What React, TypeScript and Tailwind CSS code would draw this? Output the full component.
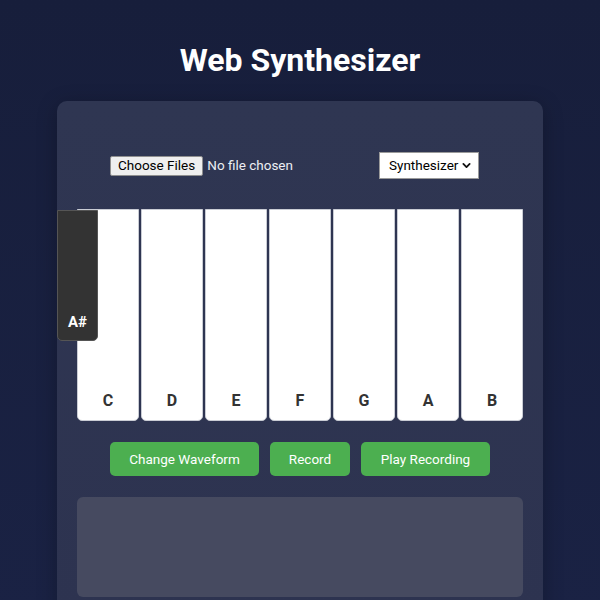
const whiteKeys = ["C", "D", "E", "F", "G", "A", "B"];

function WhiteKey({ note }: { note: string }) {
  return (
    <div className="flex h-full flex-1 items-end justify-center rounded-b-[5px] border border-[#c9ccd4] bg-white pb-[7px]">
      <span className="text-[16px] font-bold text-[#333]">{note}</span>
    </div>
  );
}

export default function App() {
  return (
    <div className="min-h-[600px] w-full overflow-hidden bg-gradient-to-b from-[#171e3b] to-[#1a2244] font-['Roboto',sans-serif]">
      <h1 className="pt-[40px] text-center text-[32px] font-bold leading-[40px] text-white">
        Web Synthesizer
      </h1>

      <div className="mx-auto mt-[21px] w-[486px] rounded-[10px] bg-gradient-to-b from-[#2f3652] to-[#2d3350] px-[20px] pb-[20px] pt-[51px] shadow-[0_4px_20px_rgba(0,0,0,0.25)]">
        {/* Controls */}
        <div className="flex h-[27px] items-center pl-[33px] pr-[44px]">
          <div className="flex items-center gap-[4px]">
            <span className="flex h-[20px] items-center rounded-[2px] border border-[#8f8f8f] bg-[#efefef] px-[7px] text-[13.5px] text-black">
              Choose Files
            </span>
            <span className="text-[13.5px] text-[#eceef3]">No file chosen</span>
          </div>
          <div className="ml-auto flex h-[27px] w-[100px] items-center justify-between border border-[#9a9a9a] bg-white pl-[9px] pr-[7px] text-[13.5px] text-black">
            <span>Synthesizer</span>
            <svg width="9" height="9" viewBox="0 0 10 10" fill="none">
              <path d="M1.5 3.2 5 6.7 8.5 3.2" stroke="#111" strokeWidth="2" strokeLinecap="round" strokeLinejoin="round" />
            </svg>
          </div>
        </div>

        {/* Piano */}
        <div className="relative mt-[30px] flex h-[212px] gap-[2px]">
          {whiteKeys.map((n) => (
            <WhiteKey key={n} note={n} />
          ))}
          <div className="absolute left-[-20px] top-[1px] flex h-[131px] w-[41px] items-end justify-center rounded-b-[5px] border border-[#555] bg-[#333] pb-[7px]">
            <span className="text-[15px] font-bold text-white">A#</span>
          </div>
        </div>

        {/* Buttons */}
        <div className="mt-[21px] flex justify-center gap-[11px]">
          <button className="h-[34px] w-[149px] rounded-[5px] bg-[#4caf50] text-[13.5px] text-white">
            Change Waveform
          </button>
          <button className="h-[34px] w-[80px] rounded-[5px] bg-[#4caf50] text-[13.5px] text-white">
            Record
          </button>
          <button className="h-[34px] w-[129px] rounded-[5px] bg-[#4caf50] text-[13.5px] text-white">
            Play Recording
          </button>
        </div>

        {/* Visualizer */}
        <div className="mt-[21px] h-[100px] rounded-[6px] bg-[#464a60]" />
      </div>
    </div>
  );
}
